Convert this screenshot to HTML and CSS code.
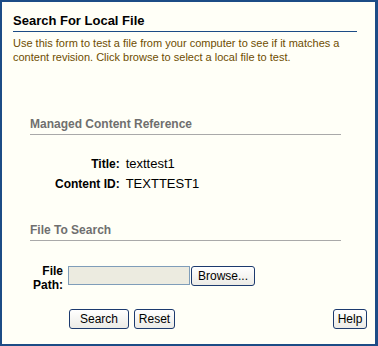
FILE: index.html
```html
<!DOCTYPE html>
<html lang="en">
<head>
    <meta charset="UTF-8">
    <title>Search For Local File</title>
    <link rel="stylesheet" href="styles.css">
</head>
<body>
    <div class="page">
        <h1 class="page-title">Search For Local File</h1>
        <div class="intro">
            Use this form to test a file from your computer to see if it matches a
            content revision. Click browse to select a local file to test.
        </div>

        <h2 class="section-title first">Managed Content Reference</h2>
        <table class="info">
            <tr>
                <td class="label">Title:</td>
                <td class="value">texttest1</td>
            </tr>
            <tr>
                <td class="label">Content ID:</td>
                <td class="value">TEXTTEST1</td>
            </tr>
        </table>

        <h2 class="section-title">File To Search</h2>
        <form class="file-form" onsubmit="return false">
            <div class="file-row">
                <label class="label" for="filePath">File<br>Path:</label>
                <input type="text" id="filePath" class="file-input">
                <button type="button" class="btn btn-browse">Browse...</button>
            </div>
            <div class="actions">
                <button type="submit" class="btn btn-search">Search</button>
                <button type="reset" class="btn btn-reset">Reset</button>
                <button type="button" class="btn btn-help">Help</button>
            </div>
        </form>
    </div>
</body>
</html>
```

FILE: styles.css
```css
html, body {
    margin: 0;
    padding: 0;
}
body {
    font-family: 'Liberation Sans', Arial, sans-serif;
    font-size: 12px;
    background-color: #fffff7;
}
.page {
    box-sizing: border-box;
    width: 378px;
    height: 346px;
    border: 2px solid #1c4c86;
    border-right-width: 3px;
    padding: 11px 18px 0 11px;
}
.page-title {
    margin: 0;
    font-size: 13px;
    font-weight: bold;
    color: #000;
    padding-bottom: 3px;
    border-bottom: 1px solid #1c4c86;
}
.intro {
    margin-top: 4px;
    color: #6e4d00;
    font-size: 11px;
    line-height: 14px;
}
.section-title {
    margin: 26px 16px 0 17px;
    font-size: 12px;
    font-weight: bold;
    color: #6f6f6f;
    padding-bottom: 3px;
    border-bottom: 1px solid #a9a9a9;
}
.section-title.first {
    margin-top: 53px;
}
.info {
    margin: 22px 0 0 36px;
    border-collapse: collapse;
}
.info td {
    padding: 0 0 6px 6px;
    line-height: 14px;
}
.label {
    font-weight: bold;
    text-align: right;
    font-size: 12px;
}
.value {
    font-size: 13px;
}
.file-form {
    margin-top: 25px;
}
.file-row {
    display: flex;
    align-items: flex-start;
    padding-left: 19px;
}
.file-row .label {
    width: 31px;
    line-height: 14px;
    margin-top: -2px;
    margin-right: 5px;
}
.file-input {
    box-sizing: border-box;
    width: 122px;
    height: 19px;
    margin: 0;
    border: 1px solid #7f9db9;
    background-color: #ecebe0;
}
.btn {
    box-sizing: border-box;
    height: 20px;
    margin: 0;
    padding: 0;
    text-align: center;
    font-family: 'Liberation Sans', Arial, sans-serif;
    font-size: 12px;
    color: #000;
    background: linear-gradient(#ffffff, #ecebe6);
    border: 1px solid #1c3a6e;
    border-radius: 3px;
}
.btn-browse {
    margin-left: 1px;
    width: 64px;
}
.actions {
    display: flex;
    margin-top: 17px;
    margin-right: -10px;
    padding-left: 56px;
}
.btn-search {
    width: 60px;
    margin-right: 5px;
}
.btn-reset {
    width: 41px;
}
.btn-help {
    width: 34px;
    margin-left: auto;
}
```
